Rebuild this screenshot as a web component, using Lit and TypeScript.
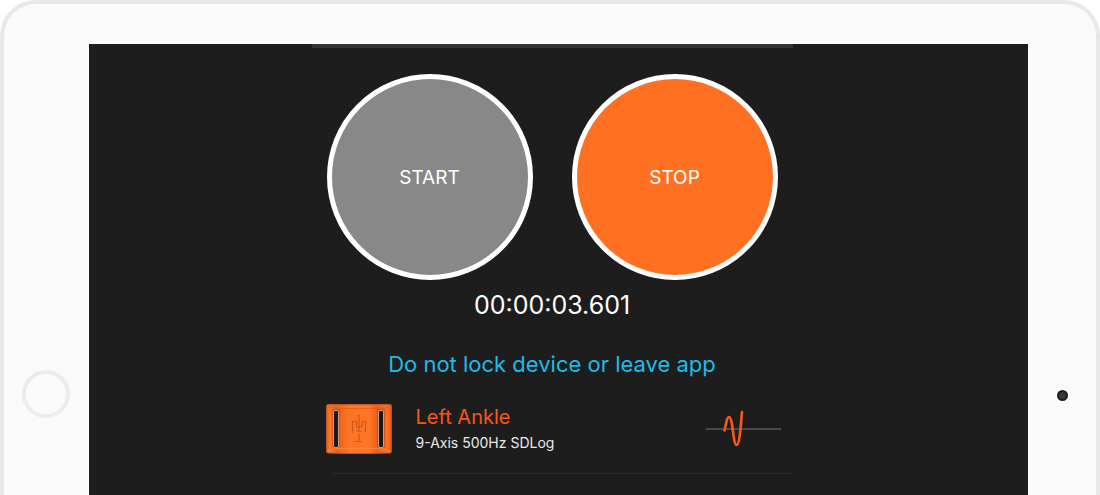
import { LitElement, html, css, svg } from "lit";
import { customElement, property, state } from "lit/decorators.js";

@customElement("sensor-photo")
class SensorPhoto extends LitElement {
  static styles = css`
    :host { display: block; }
    .art { display: block; width: 66px; height: 50px; }
  `;

  private slot_(x: number) {
    return svg`
      <rect x=${x - 1} y="5" width="8" height="39" rx="2" fill="#b9430f" opacity=".55"></rect>
      <rect x=${x + 0.5} y="6.5" width="5" height="37" rx="1.5" fill="#17181b" stroke="#d59a80" stroke-width="1"></rect>
    `;
  }

  render() {
    return html`
      <svg class="art" viewBox="0 0 66 50" role="img" aria-label="Orange sensor">
        <defs>
          <linearGradient id="body" x1="0" x2="1" y1="0" y2="0">
            <stop offset="0" stop-color="#e85f18"></stop>
            <stop offset=".05" stop-color="#ff7426"></stop>
            <stop offset=".17" stop-color="#e8601b"></stop>
            <stop offset=".24" stop-color="#f36a20"></stop>
            <stop offset=".36" stop-color="#ff7527"></stop>
            <stop offset=".66" stop-color="#ff7425"></stop>
            <stop offset=".77" stop-color="#ea611b"></stop>
            <stop offset=".95" stop-color="#fb7024"></stop>
            <stop offset="1" stop-color="#d95412"></stop>
          </linearGradient>
        </defs>
        <path d="M2 .5H64Q65.500 .5 65.500 2V47.500Q65.500 49 64 49Q33 50.500 2 49Q.5 49 .5 47.500V2Q.5 .5 2 .5Z" fill="url(#body)" stroke="#c95a24" stroke-width=".8"></path>
        <path d="M2 2Q8 5 16 4.500H50Q58 5 64 2" fill="none" stroke="#dc5714" stroke-width="1.200" opacity=".6"></path>
        <path d="M2 47Q8 44 17 44.500H49Q58 44 64 47" fill="none" stroke="#ff8a43" stroke-width="1.500" opacity=".6"></path>
        ${this.slot_(7)} ${this.slot_(52)}
        <g fill="none" stroke="#cf581b" stroke-width="1.200">
          <path d="M33 11V27M26.500 29V17.500H30.500V23H36M39.500 28V17.500H36V23M30 27H36.500M33 30V37M29 37.500H36"></path>
        </g>
      </svg>
    `;
  }
}

@customElement("signal-wave")
class SignalWave extends LitElement {
  static styles = css`
    :host { display: block; }
    .art { display: block; width: 76px; height: 40px; }
  `;

  render() {
    return html`
      <svg class="art" viewBox="0 0 76 40" role="img" aria-label="Live signal">
        <path d="M.5 20H76" stroke="#484848" stroke-width="2"></path>
        <path
          d="M19.500 21.500C21 15 22 8 24 8C28 8 28 36 31.500 36C35 36 36 12 37 3"
          fill="none" stroke="#fb5717" stroke-width="2.600" stroke-linecap="round" stroke-linejoin="round"
        ></path>
      </svg>
    `;
  }
}

@customElement("sensor-row")
class SensorRow extends LitElement {
  @property() name = "";
  @property() mode = "";

  static styles = css`
    :host { display: block; }
    .row {
      display: flex;
      align-items: center;
      gap: 24px;
      padding: 0 12px 18px 14px;
    }
    .text { flex: 1; min-width: 0; }
    .name {
      margin: 0;
      font-size: 20px;
      font-weight: 400;
      line-height: 28px;
      color: #f9561a;
    }
    .mode {
      margin: 0;
      font-size: 14px;
      line-height: 24px;
      color: #e9e9e9;
    }
    .rule {
      margin: 0 0 0 20px;
      border: 0;
      border-top: 1px solid #2a2a2a;
    }
  `;

  render() {
    return html`
      <div class="row">
        <sensor-photo></sensor-photo>
        <div class="text">
          <h2 class="name">${this.name}</h2>
          <p class="mode">${this.mode}</p>
        </div>
        <signal-wave></signal-wave>
      </div>
      <hr class="rule" />
    `;
  }
}

@customElement("app-root")
class AppRoot extends LitElement {
  @state() private elapsed = "00:00:03.601";

  static styles = css`
    :host {
      display: block;
      background: #fff;
      font-family: Inter, "Liberation Sans", sans-serif;
    }
    .device {
      box-sizing: border-box;
      display: grid;
      grid-template-columns: 84px minmax(0, 1fr) 68px;
      min-height: 100vh;
      padding-top: 37px;
      border: 4px solid #e8e8e8;
      border-bottom: 0;
      border-radius: 36px 36px 0 0;
      background: #fafafa;
    }
    .bezel {
      display: flex;
      justify-content: center;
      align-items: flex-start;
    }
    .left { padding-top: 329px; }
    .right { padding-top: 349px; }
    .home {
      box-sizing: border-box;
      width: 48px;
      height: 48px;
      padding: 0;
      border: 4px solid #ececec;
      border-radius: 50%;
      background: transparent;
    }
    .camera {
      box-sizing: border-box;
      width: 11px;
      height: 11px;
      border: 2px solid #1d1d1d;
      border-radius: 50%;
      background: #373737;
    }
    .screen {
      border: solid #fff;
      border-width: 3px 0 0 1px;
      padding-right: 13px;
      background: #1d1d1d;
      background-clip: padding-box;
    }
    .panel {
      max-width: 481px;
      margin: 0 auto;
      border-top: 4px solid #333;
    }
    .controls {
      display: flex;
      justify-content: center;
      gap: 39px;
      padding-top: 26px;
    }
    .round {
      box-sizing: border-box;
      width: 206px;
      height: 206px;
      padding: 0;
      border: 5px solid #fff;
      border-radius: 50%;
      font-family: inherit;
      font-size: 19px;
      color: #fff;
    }
    .start { background: #888; }
    .stop { background: #ff7022; }
    .timer {
      margin: 9px 0 0;
      font-size: 25px;
      line-height: 32px;
      text-align: center;
      color: #fff;
    }
    .warning {
      margin: 29px 0 25px;
      font-size: 22px;
      line-height: 28px;
      text-align: center;
      color: #1fbbe6;
    }
  `;

  render() {
    return html`
      <div class="device">
        <div class="bezel left">
          <button class="home" type="button" aria-label="Home"></button>
        </div>
        <main class="screen">
          <section class="panel">
            <div class="controls">
              <button class="round start" type="button">START</button>
              <button class="round stop" type="button">STOP</button>
            </div>
            <p class="timer" role="timer">${this.elapsed}</p>
            <p class="warning">Do not lock device or leave app</p>
            <sensor-row name="Left Ankle" mode="9-Axis 500Hz SDLog"></sensor-row>
          </section>
        </main>
        <div class="bezel right"><span class="camera"></span></div>
      </div>
    `;
  }
}
